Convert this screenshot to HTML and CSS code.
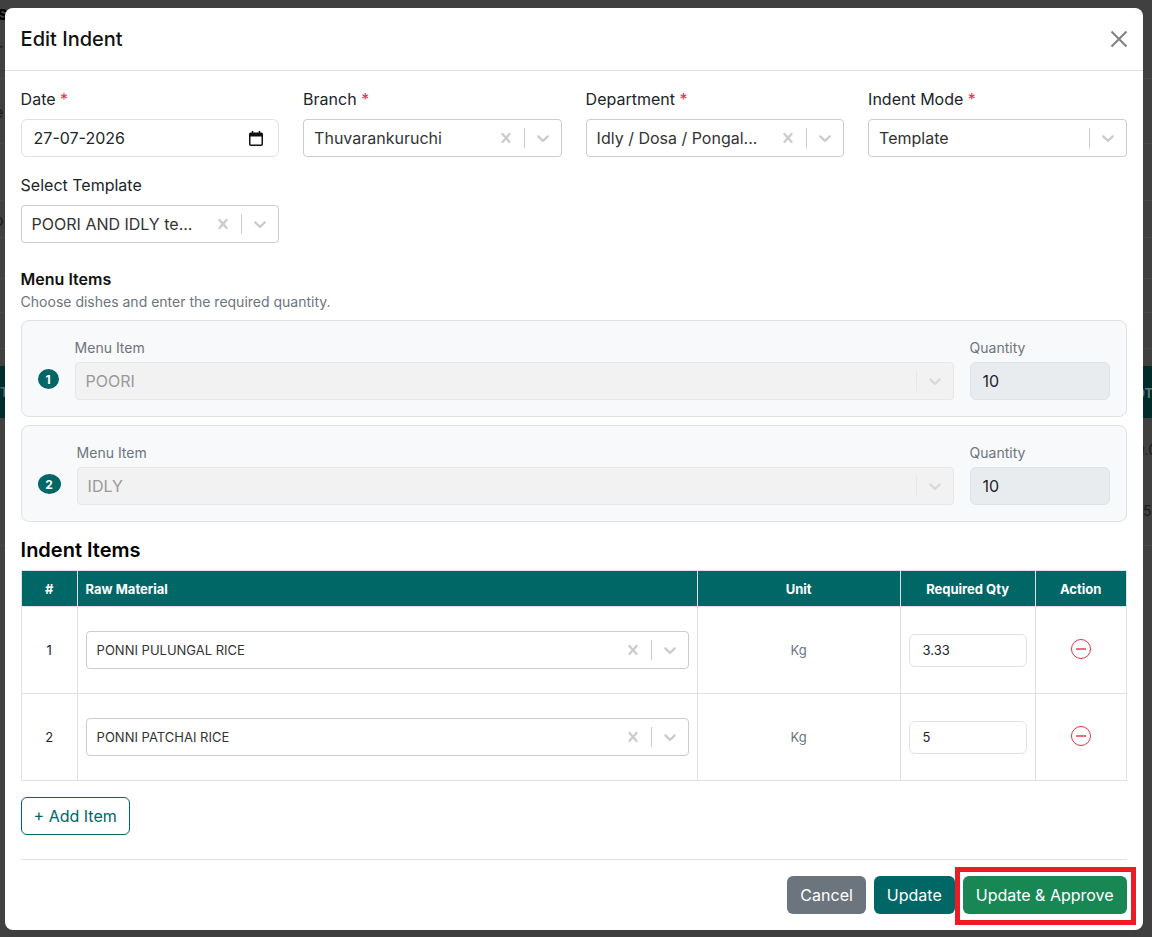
FILE: index.html
```html
<!DOCTYPE html>
<html lang="en">
<head>
    <meta charset="UTF-8">
    <meta name="viewport" content="width=device-width, initial-scale=1.0">
    <title>Edit Indent</title>
    <link rel="stylesheet" href="styles.css">
</head>
<body>
    <!-- bits of the page behind the modal -->
    <span class="behind behind-s">s</span>
    <span class="behind behind-r">r</span>
    <span class="behind behind-e">e</span>
    <span class="behind behind-o">o</span>
    <span class="behind behind-t">T</span>
    <span class="behind behind-ot">OT</span>
    <span class="behind behind-00">0.0</span>
    <span class="behind behind-50">50</span>

    <div class="modal">
        <div class="modal-header">
            <h1>Edit Indent</h1>
            <svg class="close-icon" width="20" height="20" viewBox="0 0 20 20" fill="none" stroke="#808080" stroke-width="2"><path d="M2.5 2.5 17.5 17.5M17.5 2.5 2.5 17.5"/></svg>
        </div>

        <div class="modal-body">
            <div class="form-grid">
                <div class="field">
                    <label>Date <span class="req">*</span></label>
                    <div class="date-input">
                        <span>27-07-2026</span>
                        <svg width="14" height="15" viewBox="0 0 14 15" fill="none" stroke="#111"><rect x=".75" y="2.25" width="12.5" height="12" rx="1" stroke-width="1.5"/><path d="M1 4h12" stroke-width="3"/><path d="M3.5 0v2M10.5 0v2" stroke-width="1.5"/></svg>
                    </div>
                </div>
                <div class="field">
                    <label>Branch <span class="req">*</span></label>
                    <div class="select">
                        <span class="select-value">Thuvarankuruchi</span>
                        <svg class="icon-x" viewBox="0 0 20 20"><path d="M14.348 14.849c-.469.469-1.229.469-1.697 0L10 11.819l-2.651 3.029c-.469.469-1.229.469-1.697 0-.469-.469-.469-1.229 0-1.697L8.41 10 5.651 6.849c-.469-.469-.469-1.229 0-1.697.469-.469 1.229-.469 1.697 0L10 8.183l2.651-3.031c.469-.469 1.229-.469 1.697 0 .469.469.469 1.229 0 1.697L11.59 10l2.758 3.152c.469.469.469 1.228 0 1.697z"/></svg>
                        <i class="select-sep"></i>
                        <svg class="icon-chev" viewBox="0 0 20 20"><path d="M4.516 7.548c.436-.446 1.043-.481 1.576 0L10 11.295l3.908-3.747c.533-.481 1.141-.446 1.574 0 .436.445.408 1.197 0 1.615-.406.418-4.695 4.502-4.695 4.502-.217.223-.502.335-.787.335s-.57-.112-.789-.335c0 0-4.287-4.084-4.695-4.502s-.436-1.17 0-1.615z"/></svg>
                    </div>
                </div>
                <div class="field">
                    <label>Department <span class="req">*</span></label>
                    <div class="select">
                        <span class="select-value">Idly / Dosa / Pongal...</span>
                        <svg class="icon-x" viewBox="0 0 20 20"><path d="M14.348 14.849c-.469.469-1.229.469-1.697 0L10 11.819l-2.651 3.029c-.469.469-1.229.469-1.697 0-.469-.469-.469-1.229 0-1.697L8.41 10 5.651 6.849c-.469-.469-.469-1.229 0-1.697.469-.469 1.229-.469 1.697 0L10 8.183l2.651-3.031c.469-.469 1.229-.469 1.697 0 .469.469.469 1.229 0 1.697L11.59 10l2.758 3.152c.469.469.469 1.228 0 1.697z"/></svg>
                        <i class="select-sep"></i>
                        <svg class="icon-chev" viewBox="0 0 20 20"><path d="M4.516 7.548c.436-.446 1.043-.481 1.576 0L10 11.295l3.908-3.747c.533-.481 1.141-.446 1.574 0 .436.445.408 1.197 0 1.615-.406.418-4.695 4.502-4.695 4.502-.217.223-.502.335-.787.335s-.57-.112-.789-.335c0 0-4.287-4.084-4.695-4.502s-.436-1.17 0-1.615z"/></svg>
                    </div>
                </div>
                <div class="field">
                    <label>Indent Mode <span class="req">*</span></label>
                    <div class="select">
                        <span class="select-value">Template</span>
                        <i class="select-sep"></i>
                        <svg class="icon-chev" viewBox="0 0 20 20"><path d="M4.516 7.548c.436-.446 1.043-.481 1.576 0L10 11.295l3.908-3.747c.533-.481 1.141-.446 1.574 0 .436.445.408 1.197 0 1.615-.406.418-4.695 4.502-4.695 4.502-.217.223-.502.335-.787.335s-.57-.112-.789-.335c0 0-4.287-4.084-4.695-4.502s-.436-1.17 0-1.615z"/></svg>
                    </div>
                </div>
                <div class="field">
                    <label>Select Template</label>
                    <div class="select">
                        <span class="select-value">POORI AND IDLY te...</span>
                        <svg class="icon-x" viewBox="0 0 20 20"><path d="M14.348 14.849c-.469.469-1.229.469-1.697 0L10 11.819l-2.651 3.029c-.469.469-1.229.469-1.697 0-.469-.469-.469-1.229 0-1.697L8.41 10 5.651 6.849c-.469-.469-.469-1.229 0-1.697.469-.469 1.229-.469 1.697 0L10 8.183l2.651-3.031c.469-.469 1.229-.469 1.697 0 .469.469.469 1.229 0 1.697L11.59 10l2.758 3.152c.469.469.469 1.228 0 1.697z"/></svg>
                        <i class="select-sep"></i>
                        <svg class="icon-chev" viewBox="0 0 20 20"><path d="M4.516 7.548c.436-.446 1.043-.481 1.576 0L10 11.295l3.908-3.747c.533-.481 1.141-.446 1.574 0 .436.445.408 1.197 0 1.615-.406.418-4.695 4.502-4.695 4.502-.217.223-.502.335-.787.335s-.57-.112-.789-.335c0 0-4.287-4.084-4.695-4.502s-.436-1.17 0-1.615z"/></svg>
                    </div>
                </div>
            </div>

            <h2 class="menu-title">Menu Items</h2>
            <p class="menu-sub">Choose dishes and enter the required quantity.</p>

            <div class="menu-card">
                <span class="badge badge-one">1</span>
                <div class="menu-field">
                    <span class="small-label">Menu Item</span>
                    <div class="select select-disabled">
                        <span class="select-value">POORI</span>
                        <i class="select-sep"></i>
                        <svg class="icon-chev" viewBox="0 0 20 20"><path d="M4.516 7.548c.436-.446 1.043-.481 1.576 0L10 11.295l3.908-3.747c.533-.481 1.141-.446 1.574 0 .436.445.408 1.197 0 1.615-.406.418-4.695 4.502-4.695 4.502-.217.223-.502.335-.787.335s-.57-.112-.789-.335c0 0-4.287-4.084-4.695-4.502s-.436-1.17 0-1.615z"/></svg>
                    </div>
                </div>
                <div class="qty-field">
                    <span class="small-label">Quantity</span>
                    <div class="qty-box">10</div>
                </div>
            </div>

            <div class="menu-card">
                <span class="badge badge-two">2</span>
                <div class="menu-field">
                    <span class="small-label">Menu Item</span>
                    <div class="select select-disabled">
                        <span class="select-value">IDLY</span>
                        <i class="select-sep"></i>
                        <svg class="icon-chev" viewBox="0 0 20 20"><path d="M4.516 7.548c.436-.446 1.043-.481 1.576 0L10 11.295l3.908-3.747c.533-.481 1.141-.446 1.574 0 .436.445.408 1.197 0 1.615-.406.418-4.695 4.502-4.695 4.502-.217.223-.502.335-.787.335s-.57-.112-.789-.335c0 0-4.287-4.084-4.695-4.502s-.436-1.17 0-1.615z"/></svg>
                    </div>
                </div>
                <div class="qty-field">
                    <span class="small-label">Quantity</span>
                    <div class="qty-box">10</div>
                </div>
            </div>

            <h2 class="items-title">Indent Items</h2>

            <table class="items-table">
                <thead>
                    <tr>
                        <th class="col-num">#</th>
                        <th class="col-material">Raw Material</th>
                        <th class="col-unit">Unit</th>
                        <th class="col-qty">Required Qty</th>
                        <th class="col-action">Action</th>
                    </tr>
                </thead>
                <tbody>
                    <tr>
                        <td>1</td>
                        <td class="cell-material">
                            <div class="select select-small">
                                <span class="select-value">PONNI PULUNGAL RICE</span>
                                <svg class="icon-x" viewBox="0 0 20 20"><path d="M14.348 14.849c-.469.469-1.229.469-1.697 0L10 11.819l-2.651 3.029c-.469.469-1.229.469-1.697 0-.469-.469-.469-1.229 0-1.697L8.41 10 5.651 6.849c-.469-.469-.469-1.229 0-1.697.469-.469 1.229-.469 1.697 0L10 8.183l2.651-3.031c.469-.469 1.229-.469 1.697 0 .469.469.469 1.229 0 1.697L11.59 10l2.758 3.152c.469.469.469 1.228 0 1.697z"/></svg>
                                <i class="select-sep"></i>
                                <svg class="icon-chev" viewBox="0 0 20 20"><path d="M4.516 7.548c.436-.446 1.043-.481 1.576 0L10 11.295l3.908-3.747c.533-.481 1.141-.446 1.574 0 .436.445.408 1.197 0 1.615-.406.418-4.695 4.502-4.695 4.502-.217.223-.502.335-.787.335s-.57-.112-.789-.335c0 0-4.287-4.084-4.695-4.502s-.436-1.17 0-1.615z"/></svg>
                            </div>
                        </td>
                        <td class="cell-unit">Kg</td>
                        <td><div class="qty-input">3.33</div></td>
                        <td>
                            <svg class="minus-icon" width="22" height="22" viewBox="0 0 22 22" fill="none"><circle cx="11" cy="11" r="9.5" stroke="#dc3545"/><path d="M6 11h10" stroke="#e8707d" stroke-width="2"/></svg>
                        </td>
                    </tr>
                    <tr>
                        <td>2</td>
                        <td class="cell-material">
                            <div class="select select-small">
                                <span class="select-value">PONNI PATCHAI RICE</span>
                                <svg class="icon-x" viewBox="0 0 20 20"><path d="M14.348 14.849c-.469.469-1.229.469-1.697 0L10 11.819l-2.651 3.029c-.469.469-1.229.469-1.697 0-.469-.469-.469-1.229 0-1.697L8.41 10 5.651 6.849c-.469-.469-.469-1.229 0-1.697.469-.469 1.229-.469 1.697 0L10 8.183l2.651-3.031c.469-.469 1.229-.469 1.697 0 .469.469.469 1.229 0 1.697L11.59 10l2.758 3.152c.469.469.469 1.228 0 1.697z"/></svg>
                                <i class="select-sep"></i>
                                <svg class="icon-chev" viewBox="0 0 20 20"><path d="M4.516 7.548c.436-.446 1.043-.481 1.576 0L10 11.295l3.908-3.747c.533-.481 1.141-.446 1.574 0 .436.445.408 1.197 0 1.615-.406.418-4.695 4.502-4.695 4.502-.217.223-.502.335-.787.335s-.57-.112-.789-.335c0 0-4.287-4.084-4.695-4.502s-.436-1.17 0-1.615z"/></svg>
                            </div>
                        </td>
                        <td class="cell-unit">Kg</td>
                        <td><div class="qty-input">5</div></td>
                        <td>
                            <svg class="minus-icon" width="22" height="22" viewBox="0 0 22 22" fill="none"><circle cx="11" cy="11" r="9.5" stroke="#dc3545"/><path d="M6 11h10" stroke="#e8707d" stroke-width="2"/></svg>
                        </td>
                    </tr>
                </tbody>
            </table>

            <button class="add-item">+ Add Item</button>

            <div class="modal-footer">
                <button class="btn btn-cancel">Cancel</button>
                <button class="btn btn-update">Update</button>
                <button class="btn btn-approve">Update &amp; Approve</button>
            </div>
        </div>
    </div>
</body>
</html>
```

FILE: styles.css
```css
* {
    box-sizing: border-box;
}

html, body {
    height: 100%;
}

body {
    margin: 0;
    font-family: Inter, "Noto Sans", sans-serif;
    color: #212529;
    overflow: hidden;
    position: relative;
    background:
        linear-gradient(#002c2c, #002c2c) 0 366px / 100% 52px no-repeat,
        linear-gradient(#4a4a4a, #4a4a4a) 0 78px / 100% 1px no-repeat,
        linear-gradient(#4a4a4a, #4a4a4a) 0 143px / 100% 1px no-repeat,
        linear-gradient(#4a4a4a, #4a4a4a) 0 200px / 100% 1px no-repeat,
        linear-gradient(#4a4a4a, #4a4a4a) 0 237px / 100% 1px no-repeat,
        linear-gradient(#4a4a4a, #4a4a4a) 0 278px / 100% 1px no-repeat,
        linear-gradient(#4a4a4a, #4a4a4a) 0 312px / 100% 1px no-repeat,
        linear-gradient(#4a4a4a, #4a4a4a) 0 348px / 100% 1px no-repeat,
        linear-gradient(#4a4a4a, #4a4a4a) 0 545px / 100% 1px no-repeat,
        #404040;
}

/* page behind the backdrop */
.behind {
    position: absolute;
    color: #1c1c1c;
    font-size: 16px;
    line-height: 20px;
}

.behind-s { left: -3px; top: 3px; font-size: 20px; font-weight: 700; color: #000; }
.behind-r { left: -3px; top: 39px; }
.behind-e { left: -6px; top: 102px; }
.behind-o { left: -6px; top: 210px; }
.behind-t { left: 0; top: 382px; color: #4d6a6a; font-size: 13px; font-weight: 700; }
.behind-ot { left: 1135px; top: 383px; color: #5f7878; font-size: 13px; font-weight: 700; }
.behind-00 { left: 1136px; top: 440px; font-size: 14px; }
.behind-50 { left: 1143px; top: 501px; font-size: 14px; }

.modal {
    position: relative;
    margin: 8px 0 0 4.6px;
    width: 1138px;
    height: 922px;
    background: #fff;
    border-radius: 8px;
}

.modal-header {
    display: flex;
    align-items: center;
    justify-content: space-between;
    height: 63px;
    padding: 0 14px 0 16px;
    border-bottom: 1px solid #dee2e6;
}

.modal-header h1 {
    margin: 0;
    font-size: 20px;
    font-weight: 500;
    color: #111;
}

.modal-body {
    padding: 16px;
}

.form-grid {
    display: grid;
    grid-template-columns: repeat(4, minmax(0, 1fr));
    column-gap: 24px;
    row-gap: 16px;
}

.field label {
    display: block;
    height: 24px;
    margin-bottom: 8px;
    font-size: 16px;
    line-height: 24px;
    color: #212529;
}

.req {
    color: #dc3545;
}

.date-input {
    display: flex;
    align-items: center;
    justify-content: space-between;
    height: 38px;
    padding: 0 15px 0 12px;
    border: 1px solid #dee2e6;
    border-radius: 6px;
    font-size: 16px;
    color: #212529;
}

.select {
    display: flex;
    align-items: center;
    height: 38px;
    padding-left: 10px;
    background: #fff;
    border: 1px solid #ccc;
    border-radius: 4px;
    font-size: 16px;
    color: #333;
}

.select-value {
    flex: 1;
    min-width: 0;
    white-space: nowrap;
    overflow: hidden;
    text-overflow: ellipsis;
}

.icon-x {
    flex: none;
    width: 20px;
    height: 20px;
    margin-left: 8px;
    fill: #ccc;
}

.select-sep {
    flex: none;
    width: 1px;
    height: 20px;
    margin-left: 8px;
    background: #ccc;
}

.icon-chev {
    flex: none;
    width: 20px;
    height: 20px;
    margin: 0 8px;
    fill: #ccc;
}

.select-disabled {
    background: #f2f2f2;
    border-color: #e6e6e6;
    color: #999;
}

.select-disabled .select-sep {
    background: #e6e6e6;
}

.select-disabled .icon-chev {
    fill: #d9d9d9;
}

.menu-title {
    margin: 24px 0 0;
    font-size: 16px;
    line-height: 24px;
    font-weight: 600;
    color: #111;
}

.menu-sub {
    margin: 1px 0 8px;
    font-size: 14px;
    line-height: 20px;
    color: #6c757d;
}

.menu-card {
    display: flex;
    align-items: flex-end;
    gap: 16px;
    height: 97px;
    margin-bottom: 8px;
    padding: 0 16px 16px;
    background: #f8f9fa;
    border: 1px solid #dee2e6;
    border-radius: 8px;
}

.badge {
    flex: none;
    align-self: flex-end;
    display: flex;
    align-items: center;
    justify-content: center;
    height: 20px;
    margin-bottom: 11px;
    border-radius: 50%;
    background: #006666;
    color: #fff;
    font-size: 12px;
    font-weight: 700;
}

.badge-one { width: 21px; }
.badge-two { width: 23px; }

.menu-field {
    flex: 1;
    min-width: 0;
}

.qty-field {
    flex: none;
    width: 140px;
}

.small-label {
    display: block;
    margin-bottom: 4px;
    font-size: 14px;
    line-height: 20px;
    color: #6c757d;
}

.qty-box {
    display: flex;
    align-items: center;
    height: 38px;
    padding-left: 12px;
    background: #e9ecef;
    border: 1px solid #dee2e6;
    border-radius: 6px;
    font-size: 16px;
    color: #212529;
}

.items-title {
    margin: 14px 0 6px;
    font-size: 20px;
    line-height: 28px;
    font-weight: 600;
    color: #000;
}

.items-table {
    width: 100%;
    border-collapse: collapse;
    table-layout: fixed;
    font-size: 13px;
}

.items-table th {
    height: 36px;
    padding: 0 8px;
    background: #006666;
    color: #fff;
    font-weight: 700;
    text-align: center;
    border: 1px solid #dee2e6;
}

.items-table td {
    height: 87px;
    padding: 0 8px;
    text-align: center;
    vertical-align: middle;
    border: 1px solid #dee2e6;
    color: #212529;
}

.items-table th.col-material {
    text-align: left;
}

.col-num { width: 56px; }
.col-unit { width: 203px; }
.col-qty { width: 135px; }
.col-action { width: 91px; }

.cell-unit {
    color: #6c757d !important;
}

.select-small {
    font-size: 13px;
    text-align: left;
}

.qty-input {
    display: flex;
    align-items: center;
    height: 33px;
    padding-left: 13px;
    border: 1px solid #dee2e6;
    border-radius: 6px;
    font-size: 13px;
    text-align: left;
}

.minus-icon {
    display: block;
    margin: -2px auto 0;
}

.add-item {
    display: block;
    height: 38px;
    margin-top: 16px;
    padding: 0 12px;
    background: #fff;
    border: 1px solid #006666;
    border-radius: 6px;
    font-family: inherit;
    font-size: 16px;
    color: #006666;
}

.modal-footer {
    display: flex;
    justify-content: flex-end;
    gap: 8px;
    margin-top: 24px;
    padding-top: 16px;
    border-top: 1px solid #dee2e6;
}

.btn {
    height: 38px;
    padding: 0 12px;
    border: 1px solid transparent;
    border-radius: 6px;
    font-family: inherit;
    font-size: 16px;
    color: #fff;
}

.btn-cancel { background: #6c757d; }
.btn-update { background: #006666; }

.btn-approve {
    position: relative;
    background: #198754;
}

/* red highlight drawn over the screenshot */
.btn-approve::after {
    content: "";
    position: absolute;
    top: -10px;
    right: -10px;
    bottom: -12px;
    left: -9px;
    border: 5px solid #ed1c24;
}
```
